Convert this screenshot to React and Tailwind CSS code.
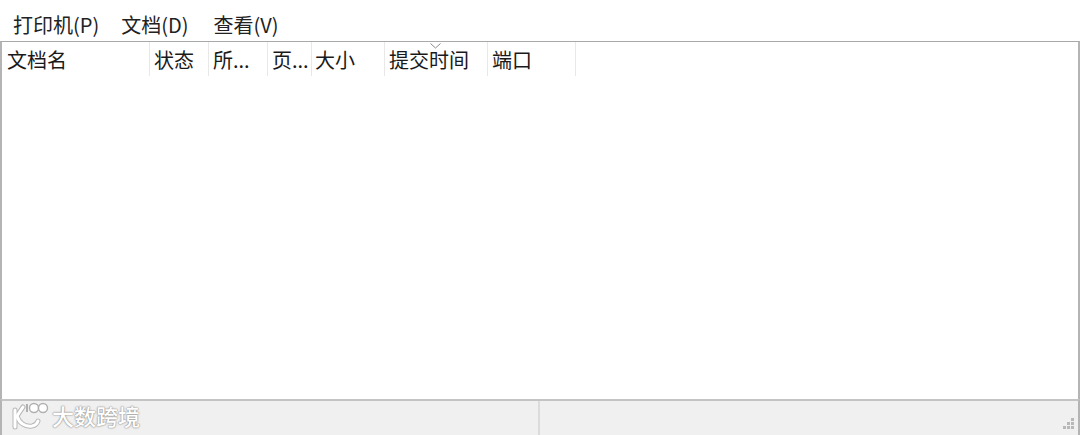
const font = { fontFamily: '"Noto Sans CJK SC", sans-serif' };

const cols = [
  { t: "文档名", w: 148, pl: "pl-[5px]" },
  { t: "状态", w: 59, pl: "pl-[4px]" },
  { t: "所...", w: 59, pl: "pl-[4px]" },
  { t: "页...", w: 44, pl: "pl-[4px]" },
  { t: "大小", w: 73, pl: "pl-[3px]" },
  { t: "提交时间", w: 103, pl: "pl-[4px]", sort: true },
  { t: "端口", w: 88, pl: "pl-[4px]" },
];

function Grip() {
  const dots = [[9, 0], [5, 4], [9, 4], [1, 8], [5, 8], [9, 8]];
  return (
    <svg width="14" height="14" viewBox="0 0 14 14" className="absolute right-[2px] bottom-[2px]">
      {dots.map(([x, y]) => (
        <rect key={`${x}-${y}`} x={x} y={y} width="3" height="3" fill="#b8b8b8" />
      ))}
    </svg>
  );
}

function LogoStrokes({ color, width }) {
  return (
    <g stroke={color} strokeWidth={width} strokeLinecap="round" fill="none">
      <path d="M5 9 L5 26" />
      <path d="M13 6 L7 15 C9 22 15 26 22 25 C25 24.5 27 23 28 20" />
    </g>
  );
}

function Logo() {
  return (
    <svg width="40" height="30" viewBox="0 0 40 30" fill="none" className="shrink-0">
      <LogoStrokes color="#b8b8b8" width="5" />
      <LogoStrokes color="#ffffff" width="3" />
      <g stroke="#b0b0b0" strokeWidth="1.4" fill="#fff">
        <path d="M17 3 L17 11" strokeWidth="2" />
        <ellipse cx="24" cy="7" rx="4.5" ry="4.5" />
        <ellipse cx="33" cy="7" rx="4.5" ry="4.5" />
      </g>
    </svg>
  );
}

export default function App() {
  return (
    <div className="w-[1080px] h-[435px] bg-white text-[#1a1a1a] overflow-hidden flex flex-col" style={font}>
      <div className="h-[41px] shrink-0 flex items-end pb-[2px] pl-[13px] text-[20px] leading-[28px] text-[#222]">
        <span>打印机(P)</span>
        <span className="ml-[22px]">文档(D)</span>
        <span className="ml-[25px]">查看(V)</span>
      </div>
      <div className="flex-1 min-h-0 flex flex-col">
        <div className="h-[358px] shrink-0 border-t border-[#a9a9a9] border-x-2 border-x-[#b4b4b4]">
          <div className="flex h-[34px]">
            {cols.map((c) => (
              <div
                key={c.t}
                className={`relative border-r border-[#e8e8e8] ${c.pl} pt-[1px] flex items-center text-[20px] leading-[33px] whitespace-nowrap`}
                style={{ width: c.w }}
              >
                {c.sort && (
                  <svg width="11" height="6" viewBox="0 0 11 6" fill="none" className="absolute left-[45px] top-[1px]">
                    <path d="M0.5 0.5 L5.5 5 L10.5 0.5" stroke="#8a8a8a" strokeWidth="1" />
                  </svg>
                )}
                {c.t}
              </div>
            ))}
          </div>
        </div>
        <div className="relative h-[49px] shrink-0 border-t-2 border-x-2 border-[#c4c4c4] border-x-[#b4b4b4] rounded-b-[14px] bg-[#f0f0f0] flex">
          <div className="w-[538px] h-[34px] border-r-2 border-[#dcdcdc] flex items-start pl-[8px] gap-[2px]">
            <Logo />
            <span className="text-[22px] leading-[28px] text-white font-medium [text-shadow:0_0_2px_#858585,0_0_1px_#858585]">
              大数跨境
            </span>
          </div>
          <div className="flex-1" />
          <div className="absolute right-0 top-0 w-[20px] h-[33px]">
            <Grip />
          </div>
        </div>
      </div>
    </div>
  );
}
